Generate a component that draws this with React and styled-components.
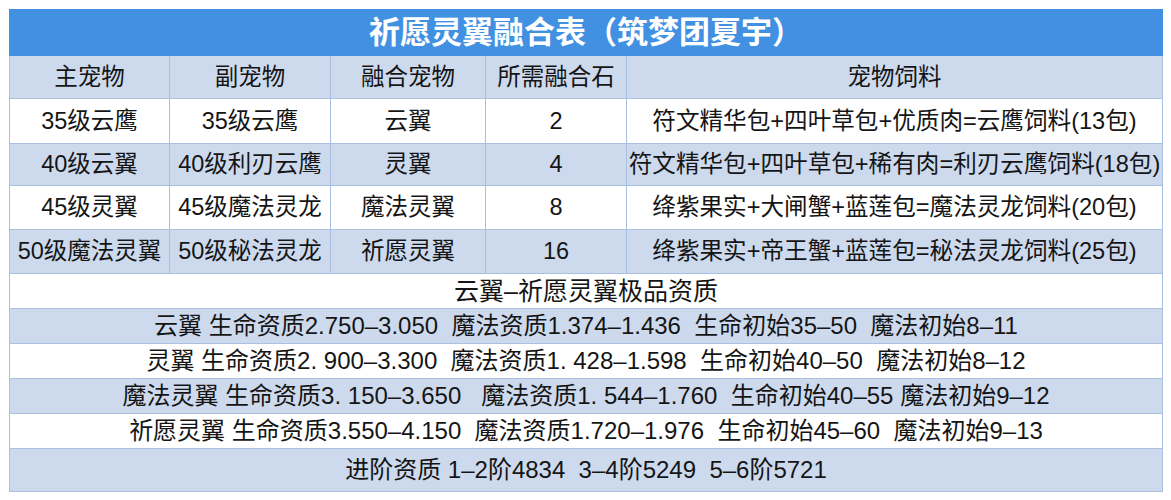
import React from "react";
import styled, { createGlobalStyle } from "styled-components";

const GlobalStyle = createGlobalStyle`
  body {
    margin: 0;
    background: #ffffff;
    font-family: "Liberation Sans", "Noto Sans CJK SC", sans-serif;
  }
`;

const Page = styled.div`
  padding: 9px;
`;

const Sheet = styled.table`
  width: 1153px;
  border-collapse: collapse;
  table-layout: fixed;
  color: #151515;
`;

const TitleCell = styled.th`
  height: 45px;
  padding: 0;
  background: #4290e2;
  color: #ffffff;
  font-size: 31px;
  line-height: 1.2;
  font-weight: 700;
  text-align: center;
  border: 1px solid #4290e2;
`;

const Row = styled.tr`
  height: ${(p) => p.$h}px;
  background: ${(p) => (p.$shade ? "#cddaee" : "#ffffff")};
`;

const Cell = styled.td`
  padding: 0;
  border: 1px solid #a9c0e1;
  text-align: center;
  font-size: ${(p) => p.$size || 23.5}px;
  line-height: 1.2;
  font-weight: 400;
  white-space: pre;
  overflow: hidden;
`;

const cols = [160, 161, 155, 141, 536];

const head = ["主宠物", "副宠物", "融合宠物", "所需融合石", "宠物饲料"];

const fusions = [
  ["35级云鹰", "35级云鹰", "云翼", "2", "符文精华包+四叶草包+优质肉=云鹰饲料(13包)"],
  ["40级云翼", "40级利刃云鹰", "灵翼", "4", "符文精华包+四叶草包+稀有肉=利刃云鹰饲料(18包)"],
  ["45级灵翼", "45级魔法灵龙", "魔法灵翼", "8", "绛紫果实+大闸蟹+蓝莲包=魔法灵龙饲料(20包)"],
  ["50级魔法灵翼", "50级秘法灵龙", "祈愿灵翼", "16", "绛紫果实+帝王蟹+蓝莲包=秘法灵龙饲料(25包)"],
];

const quality = [
  "云翼–祈愿灵翼极品资质",
  "云翼 生命资质2.750–3.050  魔法资质1.374–1.436  生命初始35–50  魔法初始8–11",
  "灵翼 生命资质2. 900–3.300  魔法资质1. 428–1.598  生命初始40–50  魔法初始8–12",
  "魔法灵翼 生命资质3. 150–3.650   魔法资质1. 544–1.760  生命初始40–55 魔法初始9–12",
  "祈愿灵翼 生命资质3.550–4.150  魔法资质1.720–1.976  生命初始45–60  魔法初始9–13",
  "进阶资质 1–2阶4834  3–4阶5249  5–6阶5721",
];

const fusionHeights = [45, 42, 44, 44];
const qualityHeights = [35, 35, 35, 35, 35, 43];

export default function App() {
  return (
    <Page>
      <GlobalStyle />
      <Sheet>
        <colgroup>
          {cols.map((w, i) => (
            <col key={i} style={{ width: w }} />
          ))}
        </colgroup>
        <thead>
          <tr>
            <TitleCell colSpan={5}>祈愿灵翼融合表（筑梦团夏宇）</TitleCell>
          </tr>
        </thead>
        <tbody>
          <Row $h={43} $shade>
            {head.map((t) => (
              <Cell key={t}>{t}</Cell>
            ))}
          </Row>
          {fusions.map((r, i) => (
            <Row key={i} $h={fusionHeights[i]} $shade={i % 2 === 1}>
              {r.map((t, j) => (
                <Cell key={j} $size={j === 4 ? 23.6 : undefined}>
                  {t}
                </Cell>
              ))}
            </Row>
          ))}
          {quality.map((t, i) => (
            <Row key={t} $h={qualityHeights[i]} $shade={i % 2 === 1}>
              <Cell colSpan={5} $size={i === 0 ? 25 : 24}>
                {t}
              </Cell>
            </Row>
          ))}
        </tbody>
      </Sheet>
    </Page>
  );
}
